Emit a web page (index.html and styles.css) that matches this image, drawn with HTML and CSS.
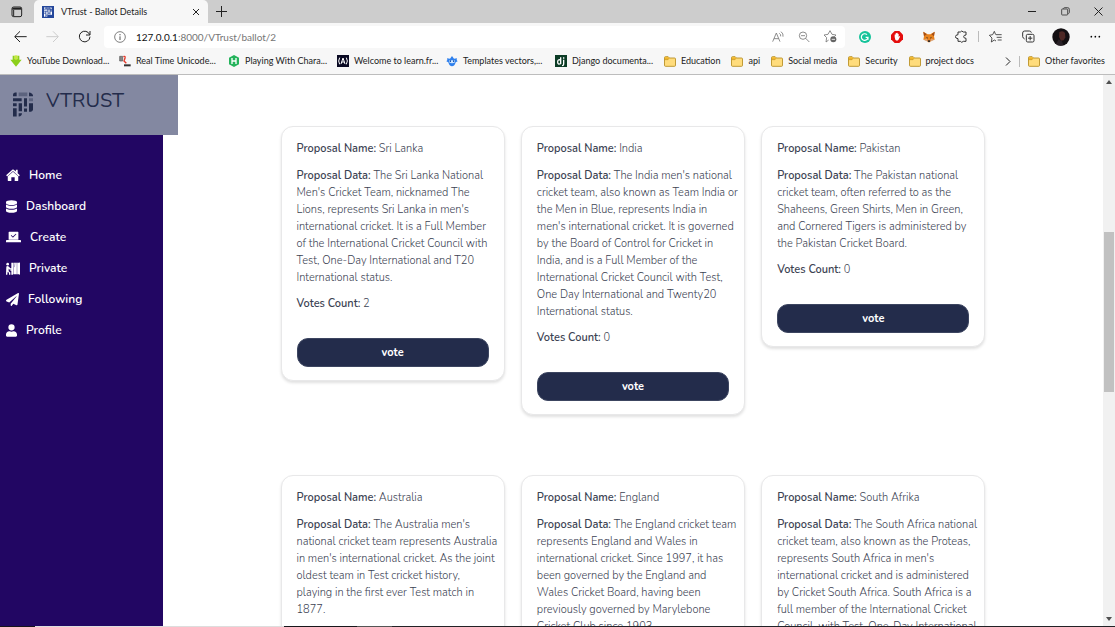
FILE: index.html
```html
<!DOCTYPE html>
<html lang="en">
<head>
<meta charset="utf-8">
<title>VTrust - Ballot Details</title>
<link rel="stylesheet" href="styles.css">
</head>
<body>
<svg class="defs" width="0" height="0" aria-hidden="true">
  <symbol id="folder" viewBox="0 0 36 33"><path d="M1.500 5q0-3 3-3h8l4 4h15q3 0 3 3v19q0 3-3 3h-27q-3 0-3-3z" fill="#ffdc7c" stroke="#b58a1c" stroke-width="2.500"/><path d="M3 4h9l4 3-4 4H3z" fill="#f0b429"/><path d="M2 11h10l4-4" fill="none" stroke="#b58a1c" stroke-width="1.500"/></symbol>
  <symbol id="weave" viewBox="0 0 60 74"><g fill="currentColor"><path d="M0 12V8q0-6 6-7h5v11zM0 18h26v9H0zM0 33h11v9H0zM0 48h11v25H0zM17 33h10v24H17zM17 63h10q0 9-10 10zM33 18h9v25h-9zM33 49h9v10h-9zM48 12V1q10 1 12 9v2zM48 33h12v20q-1 5-6 6h-6z"/><path opacity=".4" d="M17 1h26v11H17zM48 18h12v9H48z"/></g></symbol>
</svg>
<header class="browser">
  <div class="tabs">
    <button class="icon-btn tab-actions" aria-label="Tab actions"><svg width="12" height="12" viewBox="0 0 36 36"><rect x="3" y="3" width="29" height="29" rx="5" fill="none" stroke="#222" stroke-width="3"/><path d="M4 8h27" stroke="#222" stroke-width="6"/><path d="M8 12v19" stroke="#222" stroke-width="3"/></svg></button>
    <div class="tab">
      <span class="favicon"><svg width="8" height="10"><use href="#weave"/></svg></span>
      <span class="tab-title">VTrust - Ballot Details</span>
      <button class="icon-btn" aria-label="Close tab"><svg width="8" height="8" viewBox="0 0 8 8"><path d="M1 1l6 6M7 1L1 7" stroke="#222"/></svg></button>
    </div>
    <button class="icon-btn new-tab" aria-label="New tab"><svg width="11" height="11" viewBox="0 0 11 11"><path d="M5.500 0v11M0 5.500h11" stroke="#222"/></svg></button>
    <div class="window-controls">
      <button class="icon-btn" aria-label="Minimize"><svg width="9" height="9" viewBox="0 0 9 9"><path d="M0 4.500h8" stroke="#222"/></svg></button>
      <button class="icon-btn" aria-label="Restore"><svg width="9" height="9" viewBox="0 0 27 27"><path d="M2 8q0-2 2-2h14q2 0 2 2v14q0 2-2 2H4q-2 0-2-2zM7 5q1-3 4-3h9q5 0 5 5v9q0 3-3 4" fill="none" stroke="#333" stroke-width="2.500"/></svg></button>
      <button class="icon-btn" aria-label="Close"><svg width="9" height="9" viewBox="0 0 9 9"><path d="M.5.500l8 8M8.500.500l-8 8" stroke="#222"/></svg></button>
    </div>
  </div>
  <div class="toolbar">
    <div class="history">
      <button class="icon-btn" aria-label="Back"><svg width="13" height="13" viewBox="0 0 39 39"><path d="M38 20H3M18 4L2 20l16 16" fill="none" stroke="#222" stroke-width="3"/></svg></button>
      <button class="icon-btn" aria-label="Forward" disabled><svg width="13" height="13" viewBox="0 0 39 39"><path d="M1 20h35M21 4l16 16-16 16" fill="none" stroke="#ccc" stroke-width="3"/></svg></button>
      <button class="icon-btn" aria-label="Refresh"><svg width="13" height="13" viewBox="0 0 39 39"><path d="M35 14a16 16 0 1 0 1 6M36 3v12H24" fill="none" stroke="#222" stroke-width="3"/></svg></button>
    </div>
    <div class="address">
      <svg width="12" height="12" viewBox="0 0 36 36"><circle cx="18" cy="18" r="16" fill="none" stroke="#666" stroke-width="2.500"/><path d="M18 16v11M18 9v4" stroke="#555" stroke-width="3"/></svg>
      <a class="url" href="#"><b>127.0.0.1</b>:8000/VTrust/ballot/2</a>
      <div class="address-tools">
        <button class="icon-btn" aria-label="Read aloud"><svg width="12" height="12" viewBox="0 0 36 36"><path d="M2 32L13 6l11 26M6 23h14M22 7q5 3 4 9M27 2q8 6 6 15" fill="none" stroke="#777" stroke-width="2.500"/></svg></button>
        <button class="icon-btn" aria-label="Zoom out"><svg width="12" height="12" viewBox="0 0 36 36"><circle cx="15" cy="14" r="11" fill="none" stroke="#777" stroke-width="2.500"/><path d="M23 22l11 11M9 14h12" stroke="#777" stroke-width="2.500"/></svg></button>
        <button class="icon-btn" aria-label="Add to favorites"><svg width="13" height="13" viewBox="0 0 39 39"><path d="M14 30l-8 6 2-13-8-8 12-2 6-11 6 11 12 2-5 5" fill="none" stroke="#777" stroke-width="2.500"/><circle cx="28" cy="28" r="9" fill="#666"/><path d="M23 28h10" stroke="#fff" stroke-width="2.500"/></svg></button>
      </div>
    </div>
    <div class="extensions">
      <button class="icon-btn" aria-label="Grammar checker"><svg width="12" height="12" viewBox="0 0 36 36"><circle cx="18" cy="18" r="18" fill="#15c39a"/><path d="M24 11a10 10 0 1 0 3 8h-7M27 19v7" fill="none" stroke="#fff" stroke-width="3.500"/></svg></button>
      <button class="icon-btn" aria-label="Ad blocker"><svg width="12" height="12" viewBox="0 0 36 36"><path d="M11 0h14l11 11v14L25 36H11L0 25V11z" fill="#e40d0d"/><path d="M11 18V11q1-2 3 0v4-8q2-2 3 0v-1q2-2 3 0v3q2-2 3 0v9l3-3q2 0 1 2l-5 10q-5 4-9-1z" fill="#fff"/></svg></button>
      <button class="icon-btn" aria-label="Wallet"><svg width="12" height="12" viewBox="0 0 36 36"><path d="M1 2l13 8h8l13-8-2 14 2 10-10 2-4 6h-6l-4-6-10-2 2-10z" fill="#e8821e"/><path d="M1 2l10 8-8 6zM35 2l-10 8 8 6z" fill="#a34d16"/><path d="M9 18l6 2-2 3zM27 18l-6 2 2 3zM14 28h8l-1 5h-6z" fill="#382e2b"/><path d="M2 26l9-3 3 6-4 2zM34 26l-9-3-3 6 4 2z" fill="#dca67c"/></svg></button>
      <button class="icon-btn" aria-label="Extensions"><svg width="13" height="13" viewBox="0 0 39 39"><path d="M9 6h7q4-6 9 0h8v9q-7 0-7 5t7 5v9h-8q-5 6-9 0H9v-8q-8-1-8-6t8-6z" fill="none" stroke="#333" stroke-width="3" stroke-linejoin="round"/></svg></button>
      <span class="divider tool-divider"></span>
      <button class="icon-btn" aria-label="Favorites"><svg width="13" height="13" viewBox="0 0 39 39"><path d="M20 14l-4-10-5 10-10 2 8 8-2 12 9-6 5 3M21 14h17M23 22h15M26 30h12" fill="none" stroke="#333" stroke-width="2.500"/></svg></button>
      <button class="icon-btn" aria-label="Collections"><svg width="13" height="13" viewBox="0 0 39 39"><rect x="13" y="13" width="23" height="23" rx="4" fill="none" stroke="#333" stroke-width="3"/><path d="M24.500 18v13M18 24.500h13M8 27q-5-2-6-7V9q0-6 6-6h14q5 0 6 5" fill="none" stroke="#333" stroke-width="3"/></svg></button>
      <button class="icon-btn account" aria-label="Account"><svg width="18" height="18" viewBox="0 0 54 54"><circle cx="27" cy="27" r="26" fill="#130f12"/><path d="M22 12q12-5 17 3l1 13-5 9-8 1-6-11z" fill="#4e2825"/><path d="M20 34l10 6 4 12q-16 3-22-4z" fill="#292127"/></svg></button>
      <button class="icon-btn" aria-label="Settings and more"><svg width="11" height="11" viewBox="0 0 33 33"><circle cx="4" cy="17" r="2.500"/><circle cx="16" cy="17" r="2.500"/><circle cx="28" cy="17" r="2.500"/></svg></button>
    </div>
  </div>
  <nav class="bookmarks" aria-label="Favorites bar">
    <a class="site" href="#"><svg width="12" height="12" viewBox="0 0 36 36"><path d="M8 2h6v10h8V2h6v12h7L18 35 1 14h7z" fill="#8ccf1b"/><path d="M14 1h8v13h-8z" fill="#c7e93c"/></svg><span>YouTube Download...</span></a>
    <a class="site" href="#"><svg width="12" height="12" viewBox="0 0 36 36"><path d="M2 4h9v14H2z" fill="#888" stroke="#555" stroke-width="2"/><path d="M13 5q7-3 5 5l-3 8 7 7" fill="none" stroke="#e43a2a" stroke-width="4"/><path d="M15 28h20v6H15z" fill="#333"/></svg><span>Real Time Unicode...</span></a>
    <a class="site" href="#"><svg width="12" height="12" viewBox="0 0 36 36"><path d="M18 0l15 8v20l-15 8-15-8V8z" fill="#24b35b"/><path d="M12 9v18M24 9v18M12 18h12" stroke="#fff" stroke-width="4"/></svg><span>Playing With Chara...</span></a>
    <a class="site" href="#"><svg width="12" height="12" viewBox="0 0 36 36"><path d="M0 0h36v36H0z" fill="#0a0a23"/><path d="M8 8q-6 10 0 20M28 8q6 10 0 20M12 27l6-18 6 18M14 21h8" fill="none" stroke="#fff" stroke-width="3"/></svg><span>Welcome to learn.fr...</span></a>
    <a class="site" href="#"><svg width="12" height="12" viewBox="0 0 36 36"><path d="M3 10l9 1 6-8 6 8 9-1-1 5 3 4-6 3q-3 12-11 12T7 22l-6-3 3-4z" fill="#2f80ed"/><path d="M9 16h18v6q-9 6-18 0z" fill="#cce4ff"/><path d="M13 16v5M23 16v5" stroke="#1859b5" stroke-width="4"/></svg><span>Templates vectors,...</span></a>
    <a class="site" href="#"><svg width="12" height="12" viewBox="0 0 36 36"><path d="M0 0h36v36H0z" fill="#0c3c26"/><path d="M17 7v20M17 15q-9-3-9 6t9 5M26 14v14q0 4-5 4M26 7v4" fill="none" stroke="#fff" stroke-width="4"/></svg><span>Django documenta...</span></a>
    <a href="#"><svg width="12" height="11"><use href="#folder"/></svg><span>Education</span></a>
    <a href="#"><svg width="12" height="11"><use href="#folder"/></svg><span>api</span></a>
    <a href="#"><svg width="12" height="11"><use href="#folder"/></svg><span>Social media</span></a>
    <a href="#"><svg width="12" height="11"><use href="#folder"/></svg><span>Security</span></a>
    <a href="#"><svg width="12" height="11"><use href="#folder"/></svg><span>project docs</span></a>
    <div class="bookmarks-end">
      <button class="icon-btn" aria-label="More favorites"><svg width="6" height="9" viewBox="0 0 6 9"><path d="M1 .5l4 4-4 4" fill="none" stroke="#222"/></svg></button>
      <span class="divider"></span>
      <a href="#"><svg width="12" height="11"><use href="#folder"/></svg><span>Other favorites</span></a>
    </div>
  </nav>
</header>
<div class="page">
  <aside class="sidebar">
    <div class="brand"><svg width="20" height="25"><use href="#weave"/></svg><span>VTRUST</span></div>
    <nav class="menu">
      <a href="#"><svg width="14" height="12" viewBox="0 0 576 512"><path d="M288 115L69 311c-3 3-5 4-5 6v175c0 10 8 18 18 18h134V370c0-8 6-14 14-14h116c8 0 14 6 14 14v140h134c10 0 18-8 18-18V317c0-2-2-4-4-6zM571 256L488 182V44c0-7-5-12-12-12h-56c-7 0-12 5-12 12v67l-90-80c-17-15-43-15-60 0L5 256c-6 5-6 12-1 17l25 31c5 5 12 6 17 1L277 98c7-5 15-5 22 0l231 207c5 5 12 4 17-1l25-31c4-5 4-12-1-17z"/></svg>Home</a>
      <a href="#"><svg width="11" height="13" viewBox="0 0 448 512"><path d="M448 73v46c0 40-100 73-224 73S0 159 0 119V73C0 33 100 0 224 0s224 33 224 73zM0 176c50 40 137 50 224 50s174-10 224-50v103c0 40-100 73-224 73S0 319 0 279zM0 336c50 40 137 50 224 50s174-10 224-50v103c0 40-100 73-224 73S0 479 0 439z"/></svg>Dashboard</a>
      <a href="#"><svg width="15" height="12" viewBox="0 0 640 512"><path fill-rule="evenodd" d="M112 56q0-24 24-24h368q24 0 24 24v312H112zM224 170l-22 23 84 84q8 8 16 0l140-138-24-24-125 123zM0 416q0-32 32-32h576q32 0 32 32v64H0z"/></svg>Create</a>
      <a href="#"><svg width="14" height="13" viewBox="0 0 42 38"><circle cx="5" cy="6" r="4"/><path d="M1 13q3-3 7 0l5 5h6v4h-9l-2-3v8l5 4v7H9v-6l-4-3-1 9H0zM16 2h5v36h-5V26h-3v-3h3zM22 2h18v34H22zM40 1h2v37h-2z"/><path d="M33 2v34M27 3l-2 12" stroke="#220663"/></svg>Private</a>
      <a href="#"><svg width="13" height="13" viewBox="0 0 512 512"><path d="M476 3L21 266c-28 16-26 55 2 67l105 44L406 129c5-4 12 2 8 8L184 419v67c0 24 28 34 43 17l62-76 123 51c18 8 38-3 41-22L511 33c4-26-20-40-35-30z"/></svg>Following</a>
      <a href="#"><svg width="11" height="13" viewBox="0 0 448 512"><path d="M224 256a128 128 0 1 0 0-256 128 128 0 0 0 0 256zm90 32h-17a174 174 0 0 1-146 0h-17C60 288 0 348 0 422v42c0 27 21 48 48 48h352c27 0 48-21 48-48v-42c0-74-60-134-134-134z"/></svg>Profile</a>
    </nav>
  </aside>
  <main class="content">
    <div class="proposals">
      <article class="card">
        <p><strong>Proposal Name:</strong> Sri Lanka</p>
        <p><strong>Proposal Data:</strong> The Sri Lanka National<br>Men's Cricket Team, nicknamed The<br>Lions, represents Sri Lanka in men's<br>international cricket. It is a Full Member<br>of the International Cricket Council with<br>Test, One-Day International and T20<br>International status.</p>
        <p class="votes"><strong>Votes Count:</strong> 2</p>
        <button class="vote">vote</button>
      </article>
      <article class="card">
        <p><strong>Proposal Name:</strong> India</p>
        <p><strong>Proposal Data:</strong> The India men's national<br>cricket team, also known as Team India or<br>the Men in Blue, represents India in<br>men's international cricket. It is governed<br>by the Board of Control for Cricket in<br>India, and is a Full Member of the<br>International Cricket Council with Test,<br>One Day International and Twenty20<br>International status.</p>
        <p class="votes"><strong>Votes Count:</strong> 0</p>
        <button class="vote">vote</button>
      </article>
      <article class="card">
        <p><strong>Proposal Name:</strong> Pakistan</p>
        <p><strong>Proposal Data:</strong> The Pakistan national<br>cricket team, often referred to as the<br>Shaheens, Green Shirts, Men in Green,<br>and Cornered Tigers is administered by<br>the Pakistan Cricket Board.</p>
        <p class="votes"><strong>Votes Count:</strong> 0</p>
        <button class="vote">vote</button>
      </article>
      <article class="card">
        <p><strong>Proposal Name:</strong> Australia</p>
        <p><strong>Proposal Data:</strong> The Australia men's<br>national cricket team represents Australia<br>in men's international cricket. As the joint<br>oldest team in Test cricket history,<br>playing in the first ever Test match in<br>1877.</p>
        <p class="votes"><strong>Votes Count:</strong> 0</p>
        <button class="vote">vote</button>
      </article>
      <article class="card">
        <p><strong>Proposal Name:</strong> England</p>
        <p><strong>Proposal Data:</strong> The England cricket team<br>represents England and Wales in<br>international cricket. Since 1997, it has<br>been governed by the England and<br>Wales Cricket Board, having been<br>previously governed by Marylebone<br>Cricket Club since 1903.</p>
        <p class="votes"><strong>Votes Count:</strong> 0</p>
        <button class="vote">vote</button>
      </article>
      <article class="card">
        <p><strong>Proposal Name:</strong> South Afrika</p>
        <p><strong>Proposal Data:</strong> The South Africa national<br>cricket team, also known as the Proteas,<br>represents South Africa in men's<br>international cricket and is administered<br>by Cricket South Africa. South Africa is a<br>full member of the International Cricket<br>Council, with Test, One-Day International</p>
        <p class="votes"><strong>Votes Count:</strong> 0</p>
        <button class="vote">vote</button>
      </article>
    </div>
  </main>
  <div class="scrollbar" aria-hidden="true">
    <svg width="6" height="4" viewBox="0 0 6 4"><path d="M0 4l3-4 3 4z" fill="#505050"/></svg>
    <div class="track"><div class="thumb"></div></div>
    <svg width="6" height="4" viewBox="0 0 6 4"><path d="M0 0l3 4 3-4z" fill="#505050"/></svg>
  </div>
</div>
<div class="taskbar"></div>
</body>
</html>
```
FILE: styles.css
```css
* { box-sizing: border-box; }
body {
  margin: 0;
  height: 100vh;
  display: flex;
  flex-direction: column;
  overflow: hidden;
  background: #fff;
  font-family: Nunito, "Open Sans", sans-serif;
}
a { color: inherit; text-decoration: none; }
svg { display: block; flex: none; }
.defs { position: absolute; }
.icon-btn {
  display: flex;
  align-items: center;
  justify-content: center;
  flex: none;
  padding: 0;
  border: 0;
  background: none;
}

/* Browser frame */
.browser {
  flex: none;
  border-bottom: 1px solid #bdbdbd;
  background: #f7f7f7;
  color: #222;
  font: 9px/12px Lato, "Open Sans", sans-serif;
  white-space: nowrap;
}
.tabs {
  display: flex;
  align-items: center;
  height: 23px;
  padding-right: 12px;
  background: #cdcdcd;
}
.tab-actions { width: 34px; }
.tab {
  display: flex;
  align-items: center;
  width: 174px;
  height: 23px;
  padding: 0 8px;
  border-radius: 5px 5px 0 0;
  background: #f7f7f7;
}
.favicon {
  display: flex;
  align-items: center;
  justify-content: center;
  width: 12px;
  height: 12px;
  background: #24479b;
  color: #fff;
}
.tab-title { flex: 1; padding-left: 7px; }
.new-tab { width: 26px; }
.window-controls { display: flex; gap: 24px; margin-left: auto; }
.toolbar { display: flex; align-items: center; height: 27px; }
.history { display: flex; gap: 19px; width: 104px; padding-left: 14px; }
.address {
  flex: 1;
  display: flex;
  align-items: center;
  gap: 10px;
  height: 22px;
  padding: 0 8px 0 10px;
  border-radius: 4px;
  background: #fff;
}
.url { color: #767676; font-size: 10px; }
.url b { color: #111; font-weight: 400; }
.address-tools { display: flex; gap: 14px; margin-left: auto; }
.extensions {
  display: flex;
  align-items: center;
  gap: 20px;
  width: 270px;
  padding-left: 14px;
}
.divider { width: 1px; height: 11px; background: #bbb; }
.tool-divider { margin: 0 -10px; }
.account { margin-left: -3px; }
.bookmarks {
  display: flex;
  align-items: center;
  gap: 11px;
  height: 24px;
  padding: 0 10px 2px;
}
.bookmarks a { display: flex; align-items: center; gap: 5px; flex: none; }
.bookmarks .site { width: 98px; }
.bookmarks-end { display: flex; align-items: center; gap: 8px; margin-left: auto; }

/* Page */
.page { flex: 1; min-height: 0; display: flex; }
.sidebar {
  flex: none;
  width: 163px;
  background: #220663;
  color: #fff;
}
.brand {
  display: flex;
  gap: 13px;
  position: relative;
  width: 178px;
  height: 60px;
  padding: 17px 13px;
  background: #8388a1;
  color: #232c4b;
  font-size: 20px;
  line-height: 17px;
}
.menu {
  display: grid;
  gap: 15px;
  padding: 32px 6px;
  font-size: 12px;
  font-weight: 600;
  line-height: 16px;
}
.menu a { display: flex; align-items: center; gap: 9px; }
.menu svg { fill: #fff; }
.content { flex: 1; min-width: 0; overflow: hidden; padding-top: 51px; }
.proposals {
  display: grid;
  grid-template-columns: repeat(3, minmax(0, 1fr));
  align-items: start;
  gap: 60px 16px;
  width: 75%;
  margin: 0 auto;
}
.card {
  padding: 13px 15px;
  border: 1px solid #e8e8e9;
  border-radius: 12px;
  background: #fff;
  box-shadow: 0 2px 3px rgba(0, 0, 0, .12);
  color: #3b4252;
  font-size: 11px;
  font-weight: 300;
  line-height: 17px;
  white-space: nowrap;
}
.card p { margin: 0 0 10px; }
.card strong { font-weight: 600; }
.card .votes { margin: -1px 0 26px; }
.vote {
  display: block;
  width: 100%;
  height: 29px;
  padding: 0;
  border: 1px solid #3c4560;
  border-radius: 11px;
  background: #232c4b;
  color: #fff;
  font: inherit;
  font-weight: 700;
}
.scrollbar {
  flex: none;
  display: flex;
  flex-direction: column;
  align-items: center;
  width: 12px;
  padding: 5px 0;
  background: #f1f1f1;
}
.track { flex: 1; width: 10px; }
.thumb { height: 30%; margin-top: 148px; background: #c1c1c1; }
.taskbar {
  flex: none;
  height: 1px;
  background: linear-gradient(90deg, #17131c 0 35px, #ddd 35px 284px, #17171b 284px 357px, #555 357px 392px, #222226 392px);
}
```
